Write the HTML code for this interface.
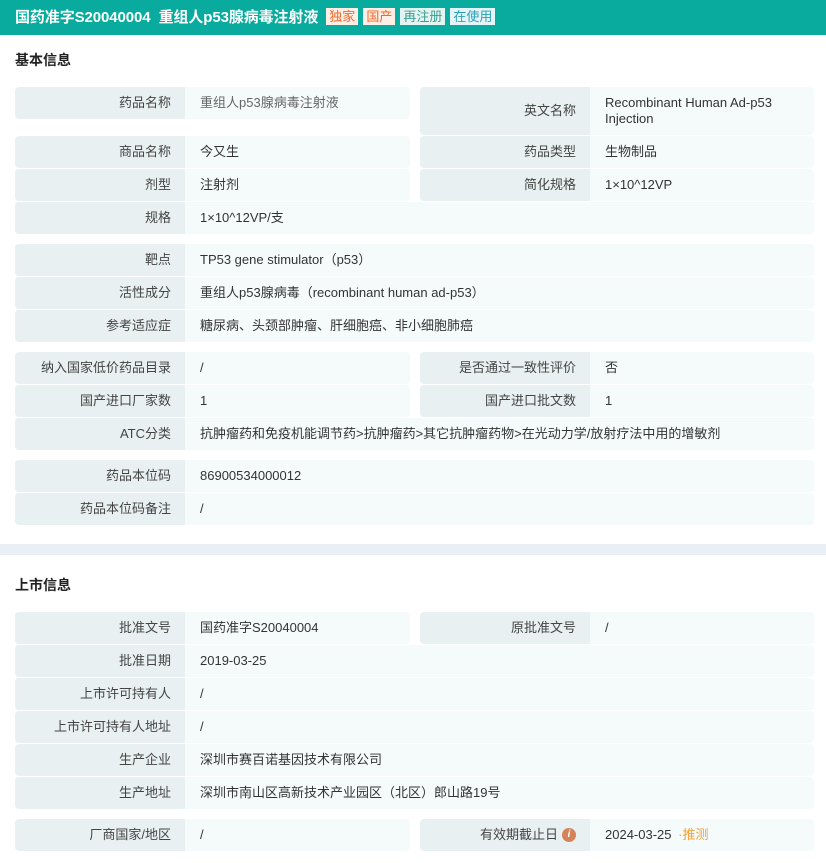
<!DOCTYPE html><html><head><meta charset="utf-8"><style>
*{margin:0;padding:0;box-sizing:border-box}
body{width:826px;height:863px;background:#fff;font-family:"Liberation Sans","Noto Sans CJK SC",sans-serif;font-size:13px;color:#333;position:relative;overflow:hidden}
.hd{position:absolute;left:0;top:0;width:826px;height:35px;background:#08ab9e;color:#fff;font-weight:bold;font-size:15px;line-height:35px;padding-left:15px;letter-spacing:-0.1px}
.tag{display:inline-block;font-size:13px;font-weight:normal;line-height:17px;padding:0 3px;margin-left:5px;vertical-align:1px;letter-spacing:0}
.t{position:absolute;left:15px;font-size:14px;font-weight:bold;color:#222}
.l,.v{position:absolute;display:flex;align-items:center;line-height:16px}
.l span,.v span{display:flex;align-items:center;line-height:16px}
.v span{display:block}
.l{background:#e8f0f1;justify-content:flex-end;padding-right:14px;color:#444;border-radius:4px 0 0 4px}
.v{background:#f5fbfb;padding-left:15px;border-radius:0 4px 4px 0}
.band{position:absolute;left:0;top:544px;width:826px;height:11px;background:#eaeff6}
</style></head><body>
<div class="hd">国药准字S20040004&nbsp; 重组人p53腺病毒注射液 <span class="tag" style="background:#fdeee6;color:#f26a2a;margin-left:4px">独家</span><span class="tag" style="background:#fdeee6;color:#f26a2a">国产</span><span class="tag" style="background:#e3f5f2;color:#3a9e90">再注册</span><span class="tag" style="background:#e3f5f8;color:#2aa0b8">在使用</span></div>
<div class="t" style="top:50px">基本信息</div>
<div class="band"></div>
<div class="t" style="top:575px">上市信息</div>
<div id="c"></div>
<script>
var L=[[87,32,"药品名称","<span style='color:#666'>重组人p53腺病毒注射液</span>"],[136,32,"商品名称","今又生"],[169,32,"剂型","注射剂"],
[352,32,"纳入国家低价药品目录","/"],[385,32,"国产进口厂家数","1"],
[612,32,"批准文号","国药准字S20040004"],[819,32,"厂商国家/地区","/"]];
var R=[[87,48,"英文名称","Recombinant Human Ad-p53<br>Injection"],[136,32,"药品类型","生物制品"],[169,32,"简化规格","1×10^12VP"],
[352,32,"是否通过一致性评价","否"],[385,32,"国产进口批文数","1"],[612,32,"原批准文号","/"],
[819,32,"有效期截止日<i style='display:inline-block;width:14px;height:14px;border-radius:50%;background:#d4825a;color:#fff;font-size:10px;line-height:14px;text-align:center;margin-left:4px;font-weight:bold'>i</i>","2024-03-25 <i style='font-style:normal;color:#f5a033;margin-left:3px'>·推测</i>"]];
var F=[[202,"规格","1×10^12VP/支"],[244,"靶点","TP53 gene stimulator（p53）"],[277,"活性成分","重组人p53腺病毒（recombinant human ad-p53）"],[310,"参考适应症","糖尿病、头颈部肿瘤、肝细胞癌、非小细胞肺癌"],
[418,"ATC分类","抗肿瘤药和免疫机能调节药>抗肿瘤药>其它抗肿瘤药物>在光动力学/放射疗法中用的增敏剂"],[460,"药品本位码","86900534000012"],[493,"药品本位码备注","/"],
[645,"批准日期","2019-03-25"],[678,"上市许可持有人","/"],[711,"上市许可持有人地址","/"],[744,"生产企业","深圳市赛百诺基因技术有限公司"],[777,"生产地址","深圳市南山区高新技术产业园区（北区）郎山路19号"]];
var h="";
function c(x,w,y,ht,cl,t){h+="<div class='"+cl+"' style='left:"+x+"px;width:"+w+"px;top:"+y+"px;height:"+ht+"px'><span>"+t+"</span></div>";}
L.forEach(function(r){c(15,170,r[0],r[1],"l",r[2]);c(185,225,r[0],r[1],"v",r[3]);});
R.forEach(function(r){c(420,170,r[0],r[1],"l",r[2]);c(590,224,r[0],r[1],"v",r[3]);});
F.forEach(function(r){c(15,170,r[0],32,"l",r[1]);c(185,629,r[0],32,"v",r[2]);});
document.getElementById("c").innerHTML=h;
</script>
</body></html>
